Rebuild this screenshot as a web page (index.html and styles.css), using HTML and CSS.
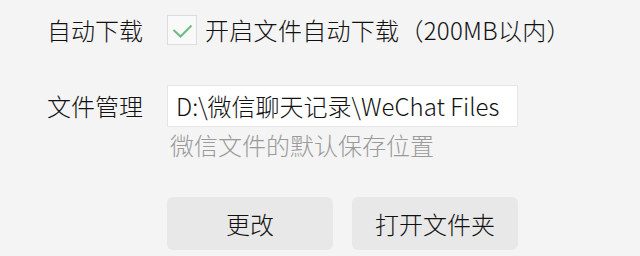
FILE: index.html
```html
<!DOCTYPE html>
<html lang="zh-CN">
<head>
<meta charset="utf-8">
<link rel="stylesheet" href="styles.css">
</head>
<body>
<div class="settings">
  <div class="row row-download">
    <div class="label">自动下载</div>
    <div class="control check-control">
      <span class="checkbox">
        <svg width="30" height="30" viewBox="0 0 30 30"><polyline points="6.5,15 13.5,21.5 24.5,10.5" fill="none" stroke="#6cbc80" stroke-width="2"/></svg>
      </span>
      <span class="check-text">开启文件自动下载（200MB以内）</span>
    </div>
  </div>
  <div class="row row-path">
    <div class="label">文件管理</div>
    <div class="control">
      <div class="path-input">D:\微信聊天记录\WeChat Files</div>
    </div>
  </div>
  <div class="hint">微信文件的默认保存位置</div>
  <div class="buttons">
    <button class="btn">更改</button>
    <button class="btn">打开文件夹</button>
  </div>
</div>
</body>
</html>
```
FILE: styles.css
```css
html, body {
  margin: 0;
  padding: 0;
  background: #f4f4f4;
}
body {
  font-family: "Noto Sans CJK SC", "Noto Sans", sans-serif;
  font-size: 24px;
  font-weight: 300;
  color: #111111;
  width: 640px;
  height: 256px;
  overflow: hidden;
}
.settings {
  padding: 15px 0 0 47px;
}
.row {
  display: flex;
  align-items: center;
}
.label {
  width: 120px;
  flex: none;
  line-height: 30px;
}
.row-download {
  height: 30px;
}
.check-control {
  display: flex;
  align-items: center;
  gap: 8px;
}
.checkbox {
  width: 28px;
  height: 28px;
  border: 1px solid #dcdcdc;
  background: #f9f9f9;
  display: flex;
  align-items: center;
  justify-content: center;
}
.checkbox svg {
  display: block;
  flex: none;
}
.check-text {
  line-height: 30px;
  letter-spacing: 0.3px;
}
.row-path {
  margin-top: 40px;
  height: 42px;
}
.path-input {
  box-sizing: border-box;
  width: 351px;
  height: 42px;
  border: 1px solid #e6e6e6;
  background: #ffffff;
  padding: 0 0 0 8px;
  line-height: 40px;
  white-space: nowrap;
  overflow: hidden;
}
.hint {
  margin: 4px 0 0 123px;
  line-height: 28px;
  color: #9a9a9a;
}
.buttons {
  margin: 38px 0 0 120px;
  display: flex;
  gap: 19px;
}
.btn {
  width: 166px;
  height: 53px;
  border: none;
  border-radius: 6px;
  background: #e8e8e8;
  font: inherit;
  color: #111111;
  padding: 0;
}
```
